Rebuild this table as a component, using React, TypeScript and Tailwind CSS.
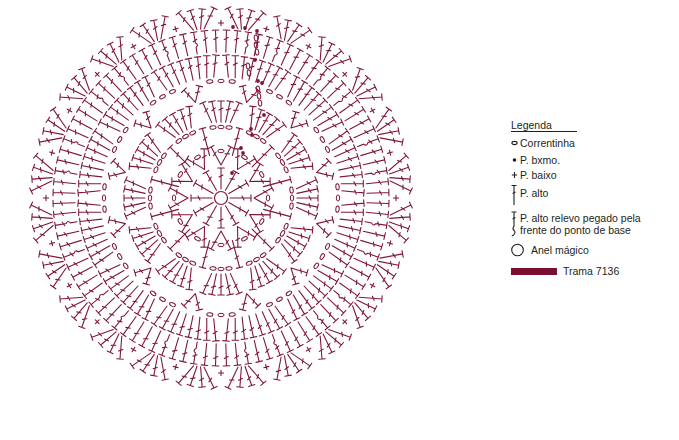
import type { ReactNode } from "react";

const CX = 221;
const CY = 198;
const INK = "#7f1838";

type Pt = [number, number];

const pol = (r: number, deg: number): Pt => {
  const a = (deg * Math.PI) / 180;
  return [CX + r * Math.cos(a), CY + r * Math.sin(a)];
};
const f = (n: number) => n.toFixed(1);

type Oval = { x: number; y: number; rot: number };

// Builds the crochet diagram: one path for the stitch strokes plus ovals (chains) and dots (slip stitches).
function buildChart() {
  let lines = "";
  const ovals: Oval[] = [];
  const dots: Pt[] = [];

  const seg = (a: Pt, b: Pt) => {
    lines += `M${f(a[0])} ${f(a[1])}L${f(b[0])} ${f(b[1])}`;
  };

  const dc = (b: Pt, t: Pt, relief = false) => {
    const dx = t[0] - b[0];
    const dy = t[1] - b[1];
    const len = Math.hypot(dx, dy);
    const ux = dx / len;
    const uy = dy / len;
    const px = -uy;
    const py = ux;
    if (relief) {
      const m1: Pt = [b[0] + dx * 0.3, b[1] + dy * 0.3];
      const m2: Pt = [b[0] + dx * 0.5, b[1] + dy * 0.5];
      const c: Pt = [b[0] + dx * 0.4 + px * 3.4, b[1] + dy * 0.4 + py * 3.4];
      lines += `M${f(b[0])} ${f(b[1])}L${f(m1[0])} ${f(m1[1])}Q${f(c[0])} ${f(c[1])} ${f(m2[0])} ${f(m2[1])}L${f(t[0])} ${f(t[1])}`;
    } else {
      seg(b, t);
    }
    seg([t[0] + px * 3.3, t[1] + py * 3.3], [t[0] - px * 3.3, t[1] - py * 3.3]);
    const m: Pt = [b[0] + dx * 0.62, b[1] + dy * 0.62];
    seg(
      [m[0] + px * 2 + ux * 1, m[1] + py * 2 + uy * 1],
      [m[0] - px * 2 - ux * 1, m[1] - py * 2 - uy * 1],
    );
  };

  const dcp = (a0: number, r0: number, a1: number, r1: number, relief = false) =>
    dc(pol(r0, a0), pol(r1, a1), relief);

  const ch = (r: number, a: number) => {
    const [x, y] = pol(r, a);
    ovals.push({ x, y, rot: a + 90 });
  };

  const sc = (r: number, a: number) => {
    const [x, y] = pol(r, a);
    const rr = (a * Math.PI) / 180;
    const ux = Math.cos(rr) * 2.6;
    const uy = Math.sin(rr) * 2.6;
    seg([x - ux, y - uy], [x + ux, y + uy]);
    seg([x + uy, y - ux], [x - uy, y + ux]);
  };

  for (let k = 0; k < 12; k++) {
    const a = k * 30;
    // round 1
    dcp(a, 9, a, 30);
    // round 2: V with a chain
    dcp(a, 33, a - 11, 52);
    dcp(a, 33, a + 11, 52);
    ch(47, a);
    // round 3: chain arc + long dc between
    for (let j = 0; j < 3; j++) ch(71, a + (j - 1) * 6.5);
    dcp(a + 15, 44, a + 15, 72);
    // round 4: fan of 5
    for (let j = 0; j < 5; j++) dcp(a + (j - 2) * 3.5, 76, a + (j - 2) * 5.4, 97);
    // round 5: V between, chain arc over fan
    dcp(a + 15, 99, a + 11, 114);
    dcp(a + 15, 99, a + 19, 114);
    for (let j = 0; j < 3; j++) ch(117, a + (j - 1) * 5.5);
  }

  // round 6
  for (let k = 0; k < 12; k++) {
    const c = k * 30 + 15;
    for (let j = 0; j < 8; j++) dcp(c + (j - 3.5) * 3.3, 121, c + (j - 3.5) * 3.7, 143);
  }

  // round 7 with relief stitches
  for (let i = 0; i < 96; i++) {
    const a = i * 3.75 + 1.875;
    dcp(a, 146, a, 168, i % 8 === 2 || i % 8 === 5);
  }

  // round 8: shells and single crochet
  for (let k = 0; k < 24; k++) {
    const p = k * 15;
    sc(175, p);
    const c = p + 7.5;
    for (let j = 0; j < 4; j++) dcp(c + (j - 1.5) * 1.2, 170, c + (j - 1.5) * 3.6, 190);
  }

  // start column: slip stitches and turning chains
  dots.push(
    [232, 173],
    [241, 148],
    [243, 153],
    [251, 129],
    [252, 135],
    [264, 115],
    [255, 60],
    [258, 81],
    [262, 83],
    [233, 27],
    [245, 28],
    [257, 31],
  );
  [
    [258, 89],
    [259, 96],
    [260, 103],
    [256, 38],
    [256, 45],
    [257, 52],
    [248, 66],
    [249, 73],
  ].forEach(([x, y]) => ovals.push({ x, y, rot: 80 }));

  return { lines, ovals, dots };
}

const chart = buildChart();

function Chart() {
  return (
    <svg width="440" height="400" viewBox="0 0 440 400" className="shrink-0">
      <circle cx={CX} cy={CY} r="6.5" fill="none" stroke={INK} strokeWidth="1.2" />
      <path d={chart.lines} fill="none" stroke={INK} strokeWidth="1.1" strokeLinecap="round" />
      {chart.ovals.map((o, i) => (
        <ellipse
          key={i}
          cx={o.x}
          cy={o.y}
          rx="3.1"
          ry="1.7"
          fill="none"
          stroke={INK}
          strokeWidth="1"
          transform={`rotate(${f(o.rot)} ${f(o.x)} ${f(o.y)})`}
        />
      ))}
      {chart.dots.map(([x, y], i) => (
        <circle key={i} cx={x} cy={y} r="1.9" fill={INK} />
      ))}
    </svg>
  );
}

function LegendRow({ icon, iconW = 9, className, children }: {
  icon: ReactNode;
  iconW?: number;
  className: string;
  children: ReactNode;
}) {
  return (
    <div className={`flex ${className}`}>
      <div style={{ width: iconW }} className="shrink-0">
        {icon}
      </div>
      <div>{children}</div>
    </div>
  );
}

export default function App() {
  return (
    <div className="flex h-[440px] w-[679px] bg-white font-['Liberation_Sans',Arial,sans-serif] text-[10.5px] text-[#231f20]">
      <Chart />
      <div className="ml-[71px] mt-[119px] flex flex-col">
        <div className="h-[13px] w-[66px] border-b border-[#231f20] leading-[12px]">Legenda</div>

        <LegendRow
          className="mt-[5px] h-[12px] items-center leading-[12px]"
          icon={
            <svg width="9" height="12">
              <ellipse cx="3.5" cy="6" rx="2.6" ry="1.6" fill="none" stroke="#231f20" strokeWidth="1.1" />
            </svg>
          }
        >
          Correntinha
        </LegendRow>

        <LegendRow
          className="mt-[5px] h-[12px] items-center leading-[12px]"
          icon={
            <svg width="9" height="12">
              <circle cx="3.5" cy="6" r="1.8" fill="#231f20" />
            </svg>
          }
        >
          P. bxmo.
        </LegendRow>

        <LegendRow
          className="mt-[3px] h-[12px] items-center leading-[12px]"
          icon={
            <svg width="9" height="12">
              <path d="M3.5 3V9M0.8 6H6.2" stroke="#231f20" strokeWidth="1.1" />
            </svg>
          }
        >
          P. baixo
        </LegendRow>

        <LegendRow
          className="mt-[3px] h-[22px] items-start leading-[12px]"
          icon={
            <svg width="9" height="22">
              <path d="M3 1.5V21M0.5 1.5H5.5M1.6 9.5L4.4 8" stroke="#231f20" strokeWidth="1.1" fill="none" />
            </svg>
          }
        >
          <div className="pt-[3px]">P. alto</div>
        </LegendRow>

        <LegendRow
          className="mt-[5px] h-[26px] items-start leading-[12px]"
          icon={
            <svg width="9" height="26">
              <path
                d="M3 1V15Q1 18 3 19.5Q5 21 3 23.5Q2 25 0.8 24.5M0.5 1H5.5M1.6 8L4.4 6.5"
                stroke="#231f20"
                strokeWidth="1.1"
                fill="none"
              />
            </svg>
          }
        >
          <div className="pt-px">
            P. alto relevo pegado pela
            <br />
            frente do ponto de base
          </div>
        </LegendRow>

        <LegendRow
          iconW={20}
          className="mt-[6px] h-[13px] items-center leading-[12px]"
          icon={
            <svg width="14" height="14">
              <circle cx="6.5" cy="7" r="5.8" fill="none" stroke="#231f20" strokeWidth="1.1" />
            </svg>
          }
        >
          Anel mágico
        </LegendRow>

        <div className="mt-[9px] flex h-[12px] items-center leading-[12px]">
          <div className="h-[7px] w-[46px] bg-[#7a1030]" />
          <span className="ml-[6px]">Trama 7136</span>
        </div>
      </div>
    </div>
  );
}
